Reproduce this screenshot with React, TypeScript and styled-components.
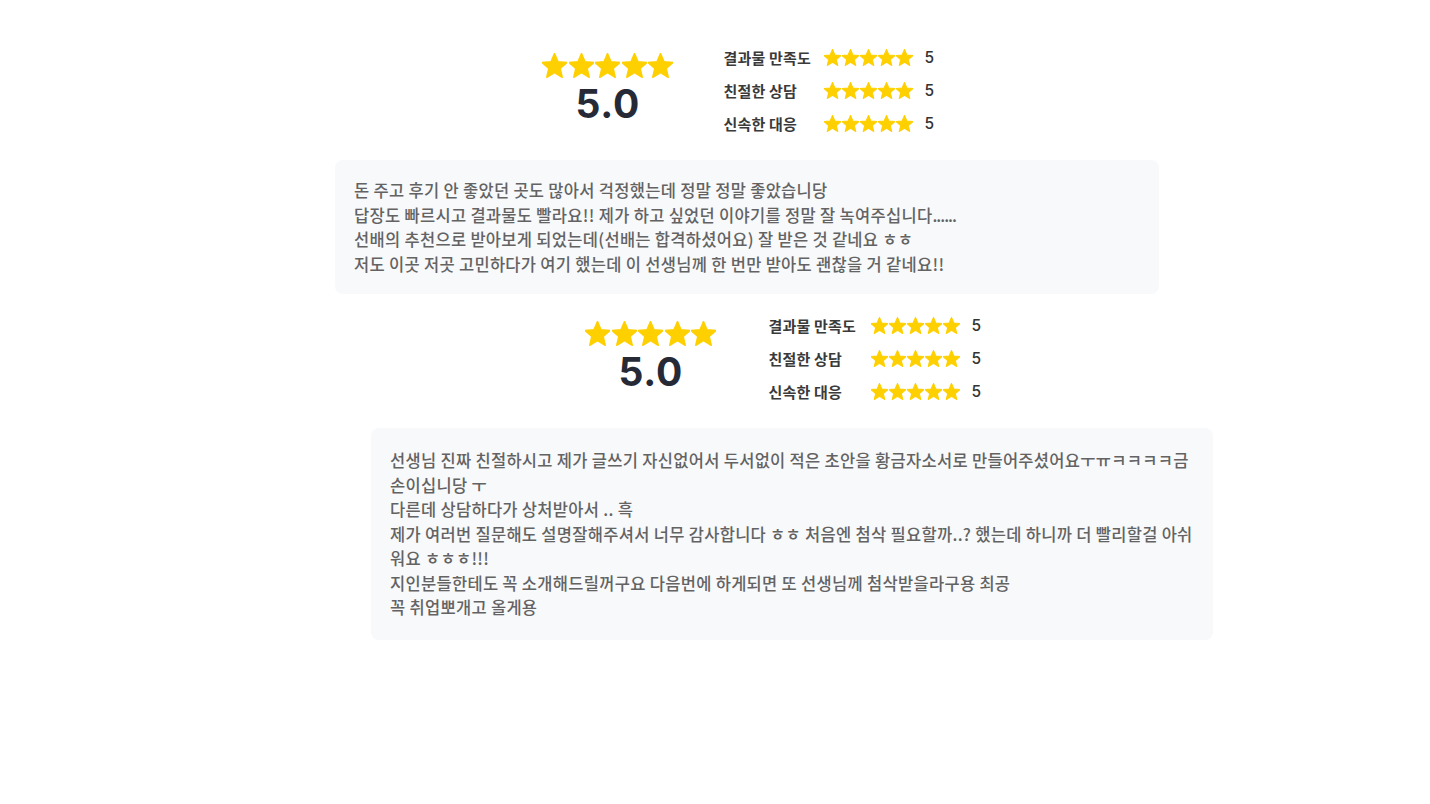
import React from "react";
import styled, { createGlobalStyle } from "styled-components";

const GlobalStyle = createGlobalStyle`
  html, body { margin: 0; padding: 0; background: #ffffff; }
  body { font-family: "Noto Sans CJK KR", "Noto Sans", sans-serif; }
`;

const Page = styled.div`
  padding-top: 41px;
  display: flex;
  flex-direction: column;
  align-items: flex-start;
`;

const Block = styled.section<{ $left: number; $width: number; $top: number }>`
  margin-left: ${(p) => p.$left}px;
  width: ${(p) => p.$width}px;
  margin-top: ${(p) => p.$top}px;
  display: flex;
  flex-direction: column;
`;

const Header = styled.div<{ $gap: number }>`
  display: flex;
  justify-content: center;
  align-items: flex-start;
  gap: ${(p) => p.$gap}px;
  padding-right: 18px;
  margin-bottom: 20px;
`;

const Summary = styled.div`
  display: flex;
  flex-direction: column;
  align-items: center;
  padding-top: 12px;
`;

const StarRow = styled.div<{ $gap: number }>`
  display: flex;
  gap: ${(p) => p.$gap}px;
`;

const Score = styled.div`
  margin-top: 4px;
  font-family: Inter, "Noto Sans", sans-serif;
  font-weight: 700;
  font-size: 39px;
  line-height: 44px;
  color: #252a36;
  letter-spacing: 0.8px;
`;

const Details = styled.div`
  display: flex;
  flex-direction: column;
`;

const DetailRow = styled.div`
  display: flex;
  align-items: center;
  height: 33px;
`;

const Label = styled.span<{ $width: number }>`
  width: ${(p) => p.$width}px;
  font-size: 15px;
  font-weight: 600;
  color: #3a3a3a;
  letter-spacing: 0.2px;
`;

const Value = styled.span`
  margin-left: 11px;
  font-family: Inter, "Noto Sans", sans-serif;
  font-size: 15.5px;
  font-weight: 500;
  color: #333333;
`;

const Card = styled.div<{ $padY: number }>`
  background: #f8f9fb;
  border-radius: 8px;
  padding: ${(p) => p.$padY}px 19px;
  font-size: 16.5px;
  font-weight: 500;
  line-height: 24.5px;
  color: #636363;
  white-space: pre-line;
  letter-spacing: 0.3px;
`;

const Dots = styled.span`
  letter-spacing: -1px;
`;

const StarSvg = styled.svg`
  display: block;
  fill: #ffd000;
`;

const Star = ({ size }: { size: number }) => (
  <StarSvg width={size} height={size} viewBox="2 1.6 20 20">
    <path
      d="M12 17.27L18.18 21l-1.64-7.03L22 9.24l-7.19-.61L12 2 9.19 8.63 2 9.24l5.46 4.73L5.82 21z"
      strokeLinejoin="round"
      stroke="#ffd000"
      strokeWidth="1.2"
    />
  </StarSvg>
);

const Stars = ({ size, gap }: { size: number; gap: number }) => (
  <StarRow $gap={gap}>
    {[0, 1, 2, 3, 4].map((i) => (
      <Star key={i} size={size} />
    ))}
  </StarRow>
);

const criteria = ["결과물 만족도", "친절한 상담", "신속한 대응"];

type Review = {
  left: number;
  width: number;
  top: number;
  gap: number;
  labelWidth: number;
  padY: number;
  text: React.ReactNode;
};

const reviews: Review[] = [
  {
    left: 335,
    width: 824,
    top: 0,
    gap: 50,
    labelWidth: 101,
    padY: 18,
    text: (
      <>
        {"돈 주고 후기 안 좋았던 곳도 많아서 걱정했는데 정말 정말 좋았습니당\n답장도 빠르시고 결과물도 빨라요!! 제가 하고 싶었던 이야기를 정말 잘 녹여주십니다"}
        <Dots>......</Dots>
        {"\n선배의 추천으로 받아보게 되었는데(선배는 합격하셨어요) 잘 받은 것 같네요 ㅎㅎ\n저도 이곳 저곳 고민하다가 여기 했는데 이 선생님께 한 번만 받아도 괜찮을 거 같네요!!"}
      </>
    ),
  },
  {
    left: 371,
    width: 842,
    top: 15,
    gap: 52,
    labelWidth: 103,
    padY: 20,
    text:
      "선생님 진짜 친절하시고 제가 글쓰기 자신없어서 두서없이 적은 초안을 황금자소서로 만들어주셨어요ㅜㅠㅋㅋㅋㅋ금\n손이십니당 ㅜ\n다른데 상담하다가 상처받아서 .. 흑\n제가 여러번 질문해도 설명잘해주셔서 너무 감사합니다 ㅎㅎ 처음엔 첨삭 필요할까..? 했는데 하니까 더 빨리할걸 아쉬\n워요 ㅎㅎㅎ!!!\n지인분들한테도 꼭 소개해드릴꺼구요 다음번에 하게되면 또 선생님께 첨삭받을라구용 최공\n꼭 취업뽀개고 올게용",
  },
];

export default function App() {
  return (
    <>
      <GlobalStyle />
      <Page>
        {reviews.map((r, idx) => (
          <Block key={idx} $left={r.left} $width={r.width} $top={r.top}>
            <Header $gap={r.gap}>
              <Summary>
                <Stars size={25} gap={1.6} />
                <Score>5.0</Score>
              </Summary>
              <Details>
                {criteria.map((c) => (
                  <DetailRow key={c}>
                    <Label $width={r.labelWidth}>{c}</Label>
                    <Stars size={17} gap={1} />
                    <Value>5</Value>
                  </DetailRow>
                ))}
              </Details>
            </Header>
            <Card $padY={r.padY}>{r.text}</Card>
          </Block>
        ))}
      </Page>
    </>
  );
}
